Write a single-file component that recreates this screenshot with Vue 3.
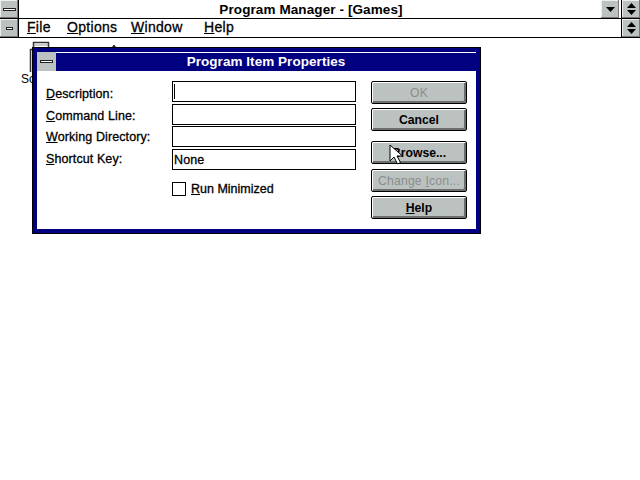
<script setup>
const fields = [
  { key: 'D', rest: 'escription:', value: '', caret: true },
  { key: 'C', rest: 'ommand Line:', value: '' },
  { key: 'W', rest: 'orking Directory:', value: '' },
  { key: 'S', rest: 'hortcut Key:', value: 'None' }
]
const menus = [
  { key: 'F', rest: 'ile' },
  { key: 'O', rest: 'ptions' },
  { key: 'W', rest: 'indow' },
  { key: 'H', rest: 'elp' }
]
</script>

<template>
  <div class="screen">
    <header class="titlebar">
      <div class="ctl sys"><span class="bar-long"></span></div>
      <div class="title">Program Manager - [Games]</div>
      <div class="ctl small">
        <svg width="11" height="12" viewBox="0 0 11 12"><path d="M1 4h9L5.500 9z" fill="#000" /></svg>
      </div>
      <div class="ctl last">
        <svg width="11" height="14" viewBox="0 0 11 14"><path d="M5.500 1L10 6H1zM1 8h9l-4.500 5z" fill="#000" /></svg>
      </div>
    </header>
    <nav class="menubar">
      <div class="ctl sys"><span class="bar-short"></span></div>
      <div class="menus">
        <span v-for="m in menus" :key="m.key" class="menu"><u>{{ m.key }}</u>{{ m.rest }}</span>
      </div>
      <div class="ctl last">
        <svg width="11" height="14" viewBox="0 0 11 14"><path d="M5.500 1L10 6H1zM1 8h9l-4.500 5z" fill="#000" /></svg>
      </div>
    </nav>

    <main class="canvas">
      <div class="icon one">
        <svg width="22" height="31" viewBox="0 0 22 31"><path d="M1.500 31V8.500h3V1.500h15v7" fill="#fff" stroke="#333" stroke-width="1.500" /><path d="M5 4h14" stroke="#999" /></svg>
        <span>So</span>
      </div>
      <div class="icon two">
        <svg width="22" height="10" viewBox="0 0 22 10"><path d="M1 9h4l3-2 1-1 2-3 2 3 1 1 3 2h4" fill="none" stroke="#222" /><path d="M9 6l2-3 2 3z" fill="#222" /></svg>
      </div>

      <section class="dialog">
        <div class="dlg-title">
          <div class="dlg-sys"><span class="bar-dlg"></span></div>
          <div class="dlg-name">Program Item Properties</div>
        </div>
        <div class="dlg-body">
          <div class="form">
            <div class="cols">
              <div class="labels">
                <label v-for="f in fields" :key="f.key" class="lbl"><u>{{ f.key }}</u>{{ f.rest }}</label>
              </div>
              <div class="inputs">
                <div v-for="f in fields" :key="f.key" class="input">
                  <i v-if="f.caret" class="caret"></i>{{ f.value }}
                </div>
              </div>
            </div>
            <div class="check">
              <span class="box"></span>
              <span><u>R</u>un Minimized</span>
            </div>
          </div>
          <div class="buttons">
            <div class="btn off">OK</div>
            <div class="btn">Cancel</div>
            <div class="btn gap">Browse...</div>
            <div class="btn off">Change <u>I</u>con...</div>
            <div class="btn"><u>H</u>elp</div>
          </div>
        </div>
      </section>

      <svg class="cursor" width="14" height="21" viewBox="0 0 14 21">
        <path d="M1 1v16l4-4 3.500 7 3-1.500-3.500-6.500h5.500z" fill="#fff" stroke="#000" stroke-width="1" />
      </svg>
    </main>
  </div>
</template>

<style scoped>
.screen {
  width: 640px;
  height: 480px;
  background: #fff;
  color: #000;
  overflow: hidden;
  display: flex;
  flex-direction: column;
  font-family: "Liberation Sans", Arial, sans-serif;
  font-weight: 700;
  font-size: 13px;
}
.titlebar,
.menubar {
  display: flex;
  align-items: stretch;
  border-bottom: 1px solid #000;
  box-sizing: border-box;
}
.titlebar { height: 19px; }
.menubar { height: 19px; }
.ctl {
  background: #bcc2c0;
  display: flex;
  align-items: center;
  justify-content: center;
  box-shadow: inset -1px -1px 0 #777, inset 1px 1px 0 #eee;
}
.sys {
  width: 18px;
  border-right: 1px solid #000;
}
.small {
  width: 18px;
  margin-right: 2px;
}
.last {
  width: 18px;
  border-left: 1px solid #000;
}
.bar-long {
  width: 13px;
  height: 3px;
  background: #fff;
  border: 1px solid #222;
  box-sizing: border-box;
}
.bar-short {
  width: 7px;
  height: 3px;
  background: #fff;
  border: 1px solid #222;
  box-sizing: border-box;
}
.title {
  flex: 1;
  text-align: center;
  font-size: 13.500px;
  line-height: 20px;
  letter-spacing: 0.1px;
  padding-left: 2px;
}
.menus {
  flex: 1;
  display: flex;
  padding-left: 8px;
  line-height: 17px;
  font-size: 14px;
  font-weight: 400;
  letter-spacing: 0.3px;
  -webkit-text-stroke: 0.3px #000;
}
.menu:nth-child(1) { width: 40px; }
.menu:nth-child(2) { width: 64px; }
.menu:nth-child(3) { width: 73px; }
.canvas {
  position: relative;
  flex: 1;
}
.icon {
  position: absolute;
  display: flex;
  flex-direction: column;
  font-weight: 400;
  font-size: 12px;
}
.icon.one { left: 21px; top: 3px; width: 30px; line-height: 14px; }
.icon.one svg { margin-left: 8px; }
.icon.two { left: 103px; top: 4px; }
.dialog {
  position: absolute;
  left: 32px;
  top: 9px;
  width: 449px;
  height: 187px;
  box-sizing: border-box;
  background: #fff;
  border: 1px solid #000;
  display: flex;
  flex-direction: column;
}
.dlg-title {
  display: flex;
  height: 23px;
  background: #000080;
  border: 4px solid #000080;
  border-bottom: 0;
  box-sizing: border-box;
  box-shadow: inset 1px 1px 0 #fff;
  flex: none;
}
.dlg-sys {
  width: 19px;
  background: #bcc2c0;
  display: flex;
  align-items: center;
  justify-content: center;
}
.bar-dlg {
  width: 13px;
  height: 3px;
  background: #fff;
  border: 1px solid #222;
  box-sizing: border-box;
}
.dlg-name {
  flex: 1;
  text-align: center;
  color: #fff;
  font-size: 13.500px;
  line-height: 19px;
  letter-spacing: 0.05px;
}
.dlg-body {
  flex: 1;
  display: flex;
  border: 4px solid #000080;
  border-top: 0;
  padding: 10px 8px 10px 9px;
  box-sizing: border-box;
  box-shadow: inset 1px 0 0 #fff, inset -1px -1px 0 #fff;
}
.form {
  width: 310px;
  flex: none;
  display: flex;
  flex-direction: column;
}
.cols {
  display: flex;
}
.labels {
  width: 126px;
  flex: none;
  display: flex;
  flex-direction: column;
  padding-top: 6px;
}
.lbl {
  height: 21.700px;
  font-size: 12.500px;
  line-height: 15px;
  font-weight: 400;
  -webkit-text-stroke: 0.3px #000;
  letter-spacing: 0.1px;
}
.inputs {
  display: flex;
  flex-direction: column;
  gap: 1.600px;
}
.input {
  width: 184px;
  height: 21px;
  border: 1px solid #000;
  box-sizing: border-box;
  padding: 1px 0 0 1px;
  font-size: 12.500px;
  font-weight: 400;
  -webkit-text-stroke: 0.3px #000;
  letter-spacing: 0.1px;
  display: flex;
  align-items: center;
}
.caret {
  width: 1px;
  height: 15px;
  background: #000;
  margin-top: -1px;
}
.check {
  display: flex;
  align-items: center;
  margin: 8px 0 0 126px;
  gap: 5px;
  font-size: 12.500px;
  font-weight: 400;
  -webkit-text-stroke: 0.3px #000;
  letter-spacing: 0;
}
.box {
  width: 14px;
  height: 14px;
  border: 1px solid #000;
  box-sizing: border-box;
}
.buttons {
  margin-left: 15px;
  width: 96px;
  display: flex;
  flex-direction: column;
  gap: 4px;
}
.btn {
  height: 23px;
  flex: none;
  box-sizing: border-box;
  border: 1px solid #000;
  border-radius: 2px;
  background: #bcc2c0;
  box-shadow: inset 1px 1px 0 #fff, inset -2px -2px 0 #6b6f6e;
  text-align: center;
  line-height: 22px;
  font-size: 12.200px;
  letter-spacing: 0;
}
.btn.gap { margin-top: 6px; margin-bottom: 1px; }
.btn.off {
  color: #8a8f8d;
  font-weight: 400;
  letter-spacing: 0.2px;
}
.cursor {
  position: absolute;
  left: 389px;
  top: 106px;
}
</style>
